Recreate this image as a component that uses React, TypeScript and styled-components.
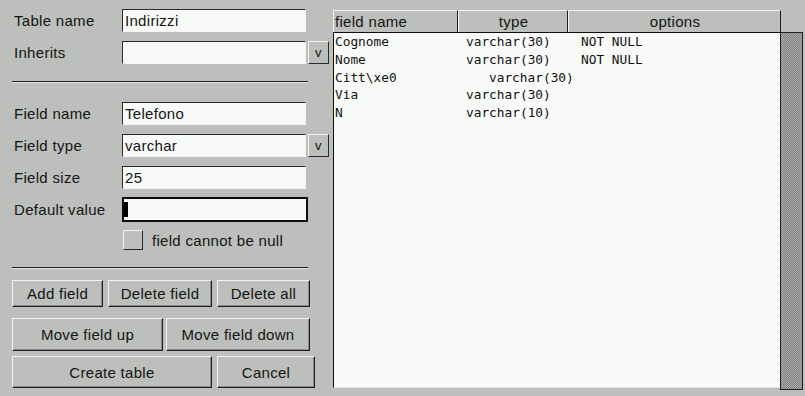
import React from 'react';
import styled, { createGlobalStyle } from 'styled-components';

const GlobalStyle = createGlobalStyle`
  html, body {
    margin: 0;
    padding: 0;
    background: #bcbfbb;
  }
`;

const LIGHT = '#f3f5f2';
const DARK = '#2a2a2a';

const Window = styled.div`
  display: flex;
  width: 805px;
  height: 396px;
  background: #bcbfbb;
  font-family: "Liberation Sans", Arial, sans-serif;
  font-size: 15px;
  letter-spacing: 0.3px;
  color: #141414;
  overflow: hidden;
`;

const LeftPanel = styled.div`
  width: 333px;
  flex-shrink: 0;
  box-sizing: border-box;
  padding: 9px 0 0 12px;
  display: flex;
  flex-direction: column;
`;

const FieldRow = styled.div<{ $mt: number; $h?: number }>`
  display: flex;
  align-items: center;
  margin-top: ${(p) => p.$mt}px;
  height: ${(p) => p.$h ?? 23}px;
`;

const Label = styled.div`
  width: 110px;
  flex-shrink: 0;
  padding-left: 2px;
  box-sizing: border-box;
  white-space: nowrap;
`;

const TextField = styled.div<{ $focused?: boolean; $w?: number }>`
  width: ${(p) => p.$w ?? 184}px;
  flex-shrink: 0;
  height: 100%;
  box-sizing: border-box;
  display: flex;
  align-items: center;
  background: #f8faf7;
  border: ${(p) => (p.$focused ? '2px solid #0c0c0c' : '1px solid')};
  border-color: ${(p) => (p.$focused ? '#0c0c0c' : `${DARK} ${LIGHT} ${LIGHT} ${DARK}`)};
  padding-left: ${(p) => (p.$focused ? '0' : '2px')};
`;

const Cursor = styled.span`
  display: block;
  width: 4px;
  height: 15px;
  background: #000;
`;

const DropButton = styled.div`
  width: 21px;
  flex-shrink: 0;
  height: 100%;
  margin-left: 2px;
  box-sizing: border-box;
  display: flex;
  align-items: center;
  justify-content: center;
  border: 1px solid;
  border-color: ${LIGHT} ${DARK} ${DARK} ${LIGHT};
  font-size: 13px;
`;

const Separator = styled.div<{ $mt: number }>`
  width: 296px;
  height: 1px;
  margin-top: ${(p) => p.$mt}px;
  background: #1c1c1c;
  border-bottom: 1px solid #e4e6e3;
`;

const CheckRow = styled.div`
  display: flex;
  align-items: center;
  margin-top: 8px;
  height: 20px;
  padding-left: 111px;
`;

const CheckBox = styled.div`
  width: 20px;
  height: 20px;
  box-sizing: border-box;
  border: 1px solid;
  border-color: ${LIGHT} ${DARK} ${DARK} ${LIGHT};
  margin-right: 9px;
`;

const ButtonRow = styled.div<{ $mt: number; $h: number; $gap: number }>`
  display: flex;
  margin-top: ${(p) => p.$mt}px;
  height: ${(p) => p.$h}px;
  gap: ${(p) => p.$gap}px;
`;

const Button = styled.button<{ $w: number }>`
  width: ${(p) => p.$w}px;
  flex-shrink: 0;
  height: 100%;
  box-sizing: border-box;
  padding: 0;
  margin: 0;
  font: inherit;
  letter-spacing: inherit;
  color: inherit;
  background: #bcbfbb;
  border: 1px solid;
  border-color: ${LIGHT} #1e1e1e #1e1e1e ${LIGHT};
  box-shadow: inset -1px -1px 0 #8a8c89;
`;

const RightPanel = styled.div`
  width: 470px;
  flex-shrink: 0;
  padding-top: 10px;
  display: flex;
  flex-direction: column;
`;

const Header = styled.div`
  display: flex;
  height: 22px;
`;

const HeaderCell = styled.div<{ $w: number; $align: 'left' | 'center' }>`
  width: ${(p) => p.$w}px;
  box-sizing: border-box;
  border-top: 1px solid ${LIGHT};
  border-left: 1px solid ${LIGHT};
  border-right: 1px solid #1e1e1e;
  display: flex;
  align-items: center;
  justify-content: ${(p) => (p.$align === 'left' ? 'flex-start' : 'center')};
  padding-left: 1px;
`;

const Body = styled.div`
  display: flex;
  height: 358px;
`;

const ListBox = styled.div`
  width: 447px;
  height: 356px;
  box-sizing: border-box;
  background: #f8faf7;
  border-top: 1px solid #0e0e0e;
  border-left: 1px solid #0e0e0e;
  border-bottom: 1px solid #e4e6e3;
  padding-left: 1px;
  font-family: "DejaVu Sans Mono", "Liberation Mono", monospace;
  font-size: 12.8px;
  letter-spacing: 0;
  color: #111;
`;

const ListRow = styled.div`
  display: grid;
  grid-template-columns: 131px 115px 1fr;
  height: 17.75px;
  line-height: 17.75px;
  white-space: nowrap;
`;

const TypeCell = styled.span<{ $shift?: number }>`
  padding-left: ${(p) => p.$shift ?? 0}px;
`;

const ScrollBar = styled.div`
  width: 23px;
  height: 358px;
  box-sizing: border-box;
  border: 1px solid #1e1e1e;
  background: repeating-conic-gradient(#7c7e7b 0% 25%, #afb1ae 0% 50%) 0 0 / 2px 2px;
`;

const fields = [
  { name: 'Cognome', type: 'varchar(30)', options: 'NOT NULL' },
  { name: 'Nome', type: 'varchar(30)', options: 'NOT NULL' },
  { name: 'Citt\\xe0', type: 'varchar(30)', options: '', shift: 23 },
  { name: 'Via', type: 'varchar(30)', options: '' },
  { name: 'N', type: 'varchar(10)', options: '' },
];

const App: React.FC = () => {
  return (
    <>
      <GlobalStyle />
      <Window>
        <LeftPanel>
          <FieldRow $mt={0}>
            <Label>Table name</Label>
            <TextField>Indirizzi</TextField>
          </FieldRow>
          <FieldRow $mt={9}>
            <Label>Inherits</Label>
            <TextField />
            <DropButton>v</DropButton>
          </FieldRow>
          <Separator $mt={17} />
          <FieldRow $mt={19}>
            <Label>Field name</Label>
            <TextField>Telefono</TextField>
          </FieldRow>
          <FieldRow $mt={9}>
            <Label>Field type</Label>
            <TextField>varchar</TextField>
            <DropButton>v</DropButton>
          </FieldRow>
          <FieldRow $mt={9}>
            <Label>Field size</Label>
            <TextField>25</TextField>
          </FieldRow>
          <FieldRow $mt={8} $h={25}>
            <Label>Default value</Label>
            <TextField $focused $w={186}>
              <Cursor />
            </TextField>
          </FieldRow>
          <CheckRow>
            <CheckBox />
            field cannot be null
          </CheckRow>
          <Separator $mt={17} />
          <ButtonRow $mt={11} $h={27} $gap={5}>
            <Button $w={91}>Add field</Button>
            <Button $w={104}>Delete field</Button>
            <Button $w={93}>Delete all</Button>
          </ButtonRow>
          <ButtonRow $mt={11} $h={33} $gap={3}>
            <Button $w={151}>Move field up</Button>
            <Button $w={144}>Move field down</Button>
          </ButtonRow>
          <ButtonRow $mt={5} $h={32} $gap={5}>
            <Button $w={200}>Create table</Button>
            <Button $w={98}>Cancel</Button>
          </ButtonRow>
        </LeftPanel>
        <RightPanel>
          <Header>
            <HeaderCell $w={125} $align="left">field name</HeaderCell>
            <HeaderCell $w={110} $align="center">type</HeaderCell>
            <HeaderCell $w={213} $align="center">options</HeaderCell>
          </Header>
          <Body>
            <ListBox>
              {fields.map((f) => (
                <ListRow key={f.name}>
                  <span>{f.name}</span>
                  <TypeCell $shift={f.shift}>{f.type}</TypeCell>
                  <span>{f.options}</span>
                </ListRow>
              ))}
            </ListBox>
            <ScrollBar />
          </Body>
        </RightPanel>
      </Window>
    </>
  );
};

export default App;
